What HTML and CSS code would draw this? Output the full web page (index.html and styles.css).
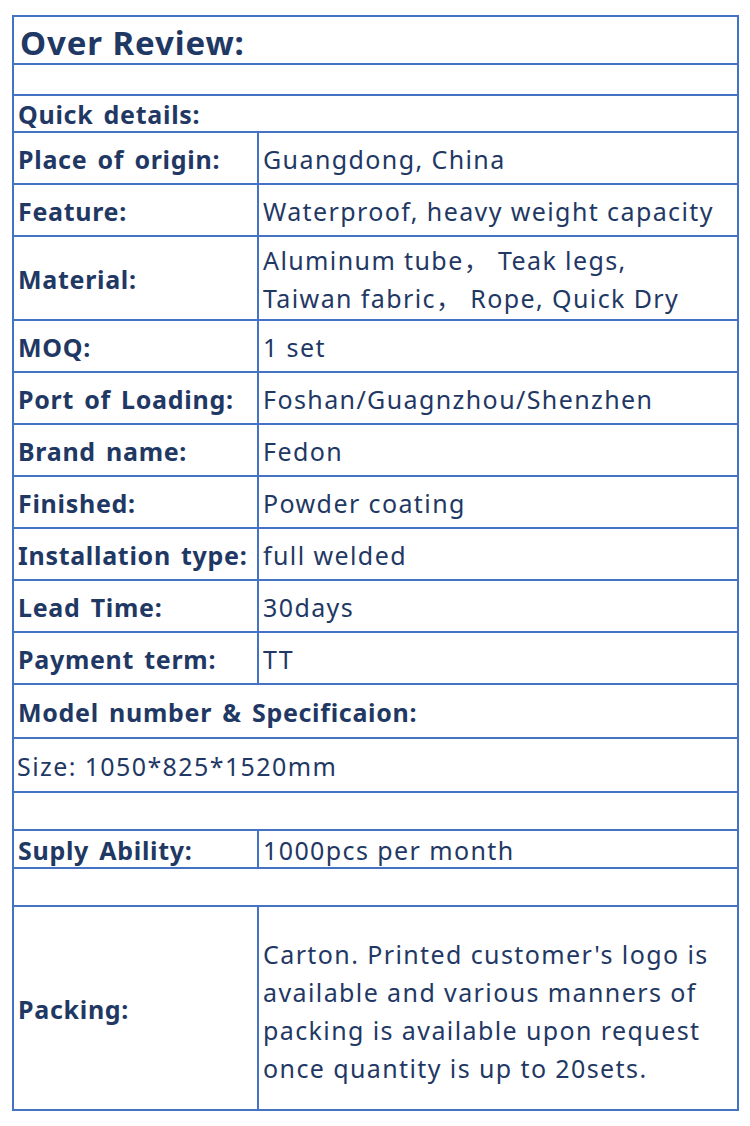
FILE: index.html
```html
<!DOCTYPE html>
<html>
<head>
<meta charset="utf-8">
<link rel="stylesheet" href="styles.css">
</head>
<body>
<table class="spec">
  <colgroup><col class="c1"><col class="c2"></colgroup>
  <tr class="h48"><td colspan="2" class="title">Over Review:</td></tr>
  <tr class="h31"><td colspan="2"></td></tr>
  <tr class="h37"><td colspan="2" class="label sub">Quick details:</td></tr>
  <tr class="h52"><td class="label">Place of origin:</td><td class="val">Guangdong, China</td></tr>
  <tr class="h52"><td class="label">Feature:</td><td class="val">Waterproof, heavy weight capacity</td></tr>
  <tr class="h84"><td class="label">Material:</td><td class="val multi">Aluminum tube，&nbsp;Teak legs,<br>Taiwan fabric，&nbsp;Rope, Quick Dry</td></tr>
  <tr class="h52"><td class="label">MOQ:</td><td class="val">1 set</td></tr>
  <tr class="h52"><td class="label">Port of Loading:</td><td class="val">Foshan/Guagnzhou/Shenzhen</td></tr>
  <tr class="h52"><td class="label">Brand name:</td><td class="val">Fedon</td></tr>
  <tr class="h52"><td class="label">Finished:</td><td class="val">Powder coating</td></tr>
  <tr class="h52"><td class="label">Installation type:</td><td class="val">full welded</td></tr>
  <tr class="h52"><td class="label">Lead Time:</td><td class="val">30days</td></tr>
  <tr class="h52"><td class="label">Payment term:</td><td class="val">TT</td></tr>
  <tr class="h54"><td colspan="2" class="label">Model number &amp; Specificaion:</td></tr>
  <tr class="h54"><td colspan="2" class="val size">Size: 1050*825*1520mm</td></tr>
  <tr class="h38"><td colspan="2"></td></tr>
  <tr class="h38"><td class="label">Suply Ability:</td><td class="val">1000pcs per month</td></tr>
  <tr class="h38"><td colspan="2"></td></tr>
  <tr class="h204"><td class="label">Packing:</td><td class="val multi pack">Carton. Printed customer's logo is available and various manners of packing is available upon request once quantity is up to 20sets.</td></tr>
</table>
</body>
</html>
```
FILE: styles.css
```css
html, body {
  margin: 0;
  padding: 0;
  background: #ffffff;
}
body {
  padding: 15px 0 0 12px;
  font-family: "Noto Sans", "Noto Sans CJK SC", "Liberation Sans", sans-serif;
  color: #1f3864;
}
.spec {
  border-collapse: collapse;
  width: 727px;
  table-layout: fixed;
  border: 2px solid #4472c4;
}
.spec td {
  border: 2px solid #4472c4;
  padding: 1px 4px 0 4px;
  vertical-align: middle;
  font-size: 25px;
  line-height: 32px;
}
.c1 { width: 245px; }
.spec .title {
  font-size: 33px;
  font-weight: 700;
  letter-spacing: 0.9px;
  padding: 6px 4px 0 6px;
}
.spec .label {
  font-weight: 700;
  letter-spacing: 0.7px;
  word-spacing: 3px;
}
.spec .val {
  font-weight: 400;
  letter-spacing: 1.4px;
}
.spec .multi { line-height: 38px; }
.spec .pack { padding-top: 5px; }
.spec .size { padding-left: 3px; }
.h48 { height: 48px; }
.h31 { height: 31px; }
.h37 { height: 37px; }
.h52 { height: 52px; }
.h54 { height: 54px; }
.h84 { height: 84px; }
.h38 { height: 38px; }
.h204 { height: 204px; }
```
